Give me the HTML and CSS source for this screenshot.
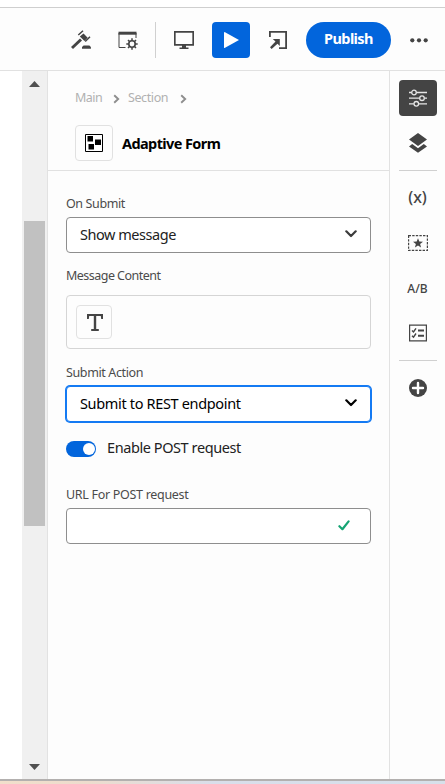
FILE: index.html
```
<!DOCTYPE html>
<html lang="en">
<head>
<meta charset="utf-8">
<title>Adaptive Form</title>
<link rel="stylesheet" href="styles.css">
</head>
<body>
<div class="app">
  <header class="toolbar">
    <button class="tool" aria-label="Rules"><svg width="20" height="20" viewBox="0 0 20 20"><path d="M1 18L10 9.500" stroke="#444" stroke-width="3"/><path d="M8.800 6.500l3.700-3 4.200 4.200-3.200 3.200z" fill="#444"/><path d="M7.300 5L12 .8M14.200 11.500L19 6.800" stroke="#444" stroke-width="1.500"/><path d="M11 18.800v-1.900l1.600-1.500h5.800l1.500 1.500v1.900z" fill="#444"/></svg></button>
    <button class="tool" aria-label="Page settings"><svg width="20" height="20" viewBox="0 0 20 20" fill="none" stroke="#444"><path d="M.5 3.200h18" stroke-width="3"/><path d="M1 3v14.500H7.500M18 3v5" /><circle cx="14" cy="14" r="3.200" stroke-width="1.600"/><path d="M14 8.300v2.500m0 6.400v2.500M8.300 14h2.500m6.400 0h2.500M10 10l1.700 1.700m4.600 4.600l1.700 1.700M18 10l-1.700 1.700m-4.600 4.600L10 18" stroke-width="1.500"/></svg></button>
    <span class="toolbar-rule"></span>
    <button class="tool" aria-label="Preview device"><svg width="20" height="20" viewBox="0 0 20 20"><path d="M.8 1.800h18.400v13H.8z" fill="none" stroke="#444" stroke-width="1.700"/><path d="M8 15h4v2.500h2.500V19h-9v-1.500H8z" fill="#444"/></svg></button>
    <button class="tool play" aria-label="Preview"><svg width="20" height="20" viewBox="0 0 20 20"><path d="M3 2.500v15q0 .7.600.4L18 10 3.600 2.100q-.6-.3-.6.400z" fill="#fff"/></svg></button>
    <button class="tool" aria-label="Open"><svg width="20" height="20" viewBox="0 0 20 20"><path d="M1.900 7V1.900h16.200v16.200H11" fill="none" stroke="#444" stroke-width="1.800"/><path d="M4.800 9h7v7L9.500 13.700 3.600 19 2 17.300l5.500-5.700z" fill="#444"/></svg></button>
    <button class="publish">Publish</button>
    <button class="tool" aria-label="More"><svg width="20" height="20" viewBox="0 0 20 20" fill="#444"><circle cx="3.300" cy="10.300" r="2.100"/><circle cx="10" cy="10.300" r="2.100"/><circle cx="16.700" cy="10.300" r="2.100"/></svg></button>
  </header>

  <main class="workspace">
    <div class="canvas"></div>
    <div class="scrollbar">
      <svg width="11" height="6" viewBox="0 0 11 6"><path d="M0 6L5.500 0 11 6z" fill="#505050"/></svg>
      <div class="track"><div class="thumb"></div></div>
      <svg width="11" height="6" viewBox="0 0 11 6"><path d="M0 0h11L5.500 6z" fill="#505050"/></svg>
    </div>

    <section class="panel">
      <div class="panel-head">
        <nav class="crumbs">
          <span class="crumb-main">Main</span>
          <svg width="7" height="10" viewBox="0 0 7 10"><path d="M1.200 1.200L5.200 5 1.200 8.800" fill="none" stroke="#8e8e8e" stroke-width="1.900"/></svg>
          <span class="crumb-section">Section</span>
          <svg width="7" height="10" viewBox="0 0 7 10"><path d="M1.200 1.200L5.200 5 1.200 8.800" fill="none" stroke="#8e8e8e" stroke-width="1.900"/></svg>
        </nav>
        <div class="component">
          <span class="component-icon"><svg width="18" height="18" viewBox="0 0 18 18"><path d="M.5.500h17v17H.5z" fill="#fff" stroke="#000"/><path d="M2.500 2H8v5.500H2.500zM10 5.500h6V11h-6zM3.500 10H9v5.500H3.500z" fill="#000"/></svg></span>
          <span class="component-name">Adaptive Form</span>
        </div>
      </div>

      <form class="fields">
        <div class="field">
          <label class="label l-submit">On Submit</label>
          <div class="control"><span class="v-show">Show message</span><svg width="12" height="8" viewBox="0 0 12 8"><path d="M1.300 1.300L6 6l4.700-4.700" fill="none" stroke="#3c3c3c" stroke-width="2.200" stroke-linecap="round" stroke-linejoin="round"/></svg></div>
        </div>
        <div class="field content-field">
          <label class="label l-content">Message Content</label>
          <div class="rich"><span class="rich-button"><svg width="16" height="17" viewBox="0 0 16 17"><path d="M0 0h16v5h-1.800L13.800 2H9.200v13h2.600v2H4.200v-2h2.600V2H2.200L1.800 5H0z" fill="#444"/></svg></span></div>
        </div>
        <div class="field action-field">
          <label class="label l-action">Submit Action</label>
          <div class="control focused"><span class="v-rest">Submit to REST endpoint</span><svg width="12" height="8" viewBox="0 0 12 8"><path d="M1.300 1.300L6 6l4.700-4.700" fill="none" stroke="#000" stroke-width="2.200" stroke-linecap="round" stroke-linejoin="round"/></svg></div>
        </div>
        <div class="switch-row"><span class="switch"><span class="knob"></span></span><span class="v-enable">Enable POST request</span></div>
        <div class="field">
          <label class="label l-url">URL For POST request</label>
          <div class="control url"><svg width="12" height="11" viewBox="0 0 12 11"><path d="M1.400 6.200l3 3L10.600 1.400" fill="none" stroke="#15a474" stroke-width="2.200" stroke-linecap="round" stroke-linejoin="round"/></svg></div>
        </div>
      </form>
    </section>

    <aside class="rail">
      <button class="rail-item active" aria-label="Properties"><svg width="18" height="18" viewBox="0 0 18 18" fill="none" stroke="#e6e6e6" stroke-width="1.300"><path d="M0 3.500h2.500m5 0H18M0 9.200h10.500m5 0H18M0 14.800h4.800m5 0H18"/><circle cx="5" cy="3.500" r="2.300"/><circle cx="13" cy="9.200" r="2.300"/><circle cx="7.300" cy="14.800" r="2.300"/></svg></button>
      <button class="rail-item" aria-label="Layers"><svg width="18" height="20" viewBox="0 0 18 20" fill="#444"><path d="M9 0l9 6.500L9 13 0 6.500zM0 13.400l3.200-2.300L9 15.300l5.800-4.200 3.200 2.300-9 6.400z"/></svg></button>
      <span class="rail-rule"></span>
      <button class="rail-item vars">(x)</button>
      <button class="rail-item" aria-label="Fragment"><svg width="20" height="16" viewBox="0 0 20 16"><path d="M.6.600h18.800v14.800H.6z" fill="none" stroke="#444" stroke-width="1.200" stroke-dasharray="2.400 1.200"/><path d="M10 3.200l1.300 3.400 3.700.1-2.900 2.300 1 3.500L10 10.500l-3.100 2 1-3.500L5 6.700l3.700-.1z" fill="#444"/></svg></button>
      <button class="rail-item ab">A/B</button>
      <button class="rail-item" aria-label="Checklist"><svg width="18" height="18" viewBox="0 0 18 18" fill="none" stroke="#444"><path d="M.6 1.100h16.800v15.800H.6z" stroke-width="1.200"/><path d="M3 6.500L4.500 8 7 4.300M3 11.700l1.500 1.500L7 9.500" stroke-width="1.400"/><path d="M9 6.500h6M9 11.800h6" stroke-width="2"/></svg></button>
      <span class="rail-rule"></span>
      <button class="rail-item" aria-label="Add"><svg width="18" height="18" viewBox="0 0 18 18"><circle cx="9" cy="9" r="9" fill="#444"/><path d="M9 4v10M4 9h10" stroke="#fff" stroke-width="2.400" stroke-linecap="round"/></svg></button>
    </aside>
  </main>
  <footer class="bottom-edge"></footer>
</div>
</body>
</html>
```

FILE: styles.css
```
* { box-sizing: border-box; }
body {
  margin: 0;
  background: #fff;
  color: #222;
  font-family: "Noto Sans", "Open Sans", sans-serif;
  font-size: 14.5px;
}
button {
  margin: 0;
  padding: 0;
  border: 0;
  background: transparent;
  color: #444;
  font-family: inherit;
}
svg { display: block; flex-shrink: 0; }
.app {
  display: grid;
  grid-template-rows: 64px 1fr 5px;
  height: 784px;
  padding-top: 7px;
  overflow: hidden;
}
.toolbar {
  display: flex;
  justify-content: flex-end;
  align-items: center;
  gap: 9px;
  padding: 1px 7px 0 0;
  border-top: 1px solid #cfcfcf;
  border-bottom: 1px solid #e1e1e1;
  background: #fdfdfd;
}
.tool {
  display: flex;
  align-items: center;
  justify-content: center;
  width: 38px;
  height: 36px;
}
.toolbar-rule { width: 1px; height: 36px; margin-left: -1px; background: #d0d0d0; }
.play { border-radius: 4px; background: #0265dc; }
.publish {
  width: 85px;
  height: 36px;
  padding-bottom: 3px;
  border-radius: 18px;
  background: #0265dc;
  color: #fff;
  font-size: 14.5px;
  font-weight: 700;
  letter-spacing: -0.6px;
}
.workspace { display: grid; grid-template-columns: 22px 25px 343px 55px; min-height: 0; }
.canvas { background: #fff; }
.scrollbar {
  display: flex;
  flex-direction: column;
  align-items: center;
  padding: 10px 0 9px;
  background: #f0f0f0;
}
.track { flex: 1; width: 21px; padding-top: 134px; }
.thumb { height: 305px; background: #c1c1c1; }
.panel { border: solid #e2e2e2; border-width: 0 1px; background: #fdfdfd; }
.panel-head { height: 100px; padding: 17px 0 0 27px; border-bottom: 1px solid #e1e1e1; }
.crumbs { display: flex; align-items: center; height: 20px; color: #b1b1b1; font-size: 12.5px; line-height: 20px; }
.crumbs svg { margin-top: 2px; }
.crumb-main { width: 38px; letter-spacing: -0.5px; }
.crumb-section { width: 52px; margin-left: 8px; letter-spacing: -0.4px; }
.component { display: flex; align-items: center; gap: 9px; margin-top: 17px; }
.component-icon {
  display: flex;
  align-items: center;
  justify-content: center;
  width: 38px;
  height: 36px;
  border: 1px solid #e1e1e1;
  border-radius: 4px;
}
.component-name { color: #000; font-size: 14.5px; font-weight: 700; letter-spacing: -0.6px; white-space: nowrap; }
.fields { padding: 24px 18px 0; }
.label { display: block; height: 22px; color: #4b4b4b; font-size: 12.5px; line-height: 18px; white-space: nowrap; }
.l-submit { letter-spacing: -0.39px; }
.l-content { letter-spacing: -0.53px; }
.l-action { letter-spacing: -0.37px; }
.l-url { letter-spacing: -0.3px; }
.v-show { letter-spacing: -0.46px; }
.v-rest { letter-spacing: -0.34px; }
.v-enable { margin-top: -2px; letter-spacing: -0.42px; }
.control {
  display: flex;
  align-items: center;
  justify-content: space-between;
  height: 36px;
  padding: 0 13px 2px 13px;
  border: 1px solid #8e8e8e;
  border-radius: 4px;
  background: #fff;
  white-space: nowrap;
}
.focused { border-color: #147af3; color: #000; box-shadow: 0 0 0 1px #147af3; }
.content-field { margin-top: 14px; }
.content-field .label { height: 28px; }
.rich { height: 54px; padding: 9px; border: 1px solid #d5d5d5; border-radius: 4px; }
.rich-button {
  display: flex;
  align-items: center;
  justify-content: center;
  width: 36px;
  height: 34px;
  padding-left: 2px;
  border: 1px solid #e1e1e1;
  border-radius: 4px;
}
.action-field { margin-top: 15px; }
.switch-row { display: flex; align-items: center; gap: 11px; height: 20px; margin: 16px 0 28px; white-space: nowrap; }
.switch { display: flex; justify-content: flex-end; width: 30px; height: 16px; margin-top: 2px; padding: 2px 1px 2px 2px; border-radius: 8px; background: #0265dc; }
.knob { width: 12px; height: 12px; border-radius: 50%; background: #fff; }
.url { justify-content: flex-end; padding-right: 20px; }
.rail { display: flex; flex-direction: column; align-items: center; gap: 9px; padding: 9px 0 0; background: #fdfdfd; }
.rail-item { display: flex; align-items: center; justify-content: center; width: 38px; height: 36px; }
.active { border-radius: 4px; background: #444; }
.rail-rule { width: 38px; height: 1px; background: #d0d0d0; }
.vars { padding-bottom: 2px; font-size: 16px; font-weight: 500; }
.ab { font-size: 12px; font-weight: 500; }
.bottom-edge {
  border-top: 2px solid #b3b0af;
  background: linear-gradient(90deg, #f1dfcb, #eddccd 20%, #d9deea 48%, #d7e0ea);
}
```
